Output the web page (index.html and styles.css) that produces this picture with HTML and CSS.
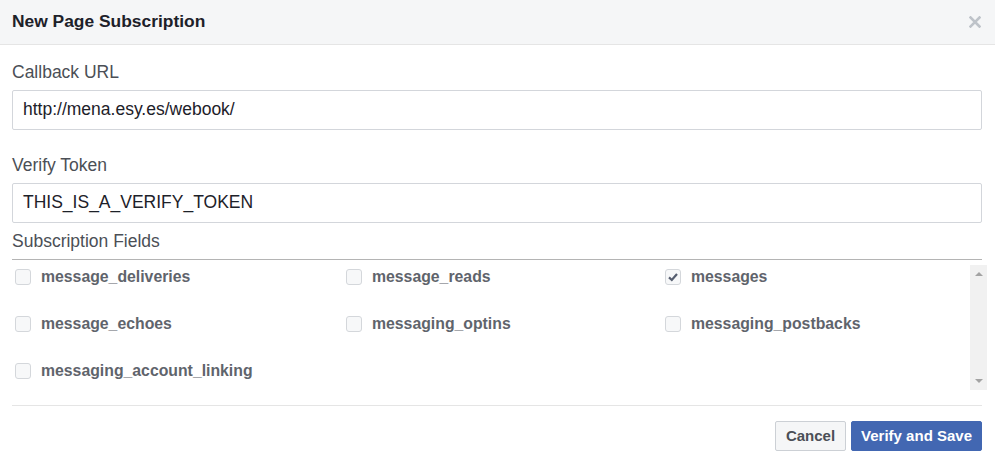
FILE: index.html
```html
<!DOCTYPE html>
<html>
<head>
<meta charset="utf-8">
<title>New Page Subscription</title>
<link rel="stylesheet" href="styles.css">
</head>
<body>
<div class="dialog">
  <header class="hd">
    <h1 class="title">New Page Subscription</h1>
    <span class="close" aria-label="Close">
      <svg width="12" height="12" viewBox="0 0 12 12"><path d="M1.5 1.5L10.5 10.5M10.5 1.5L1.5 10.5" stroke="#bec3c9" stroke-width="2.6" stroke-linecap="square" fill="none"/></svg>
    </span>
  </header>
  <div class="bd">
    <label class="lbl first">Callback URL</label>
    <div class="field">http://mena.esy.es/webook/</div>
    <label class="lbl second">Verify Token</label>
    <div class="field">THIS_IS_A_VERIFY_TOKEN</div>
    <div class="sf">Subscription Fields</div>
    <div class="scroll">
      <div class="grid">
        <div class="item"><span class="cb"></span><span class="name">message_deliveries</span></div>
        <div class="item"><span class="cb"></span><span class="name">message_reads</span></div>
        <div class="item"><span class="cb checked"><svg width="14" height="14" viewBox="0 0 14 14"><path d="M3 7.4L5.8 10L11 4" stroke="#565e70" stroke-width="2.2" fill="none"/></svg></span><span class="name">messages</span></div>
        <div class="item"><span class="cb"></span><span class="name">message_echoes</span></div>
        <div class="item"><span class="cb"></span><span class="name">messaging_optins</span></div>
        <div class="item"><span class="cb"></span><span class="name">messaging_postbacks</span></div>
        <div class="item"><span class="cb"></span><span class="name">messaging_account_linking</span></div>
      </div>
      <div class="sbar">
        <span class="arr up"></span>
        <span class="arr down"></span>
      </div>
    </div>
  </div>
  <footer class="ft">
    <button class="btn cancel">Cancel</button>
    <button class="btn primary">Verify and Save</button>
  </footer>
</div>
</body>
</html>
```
FILE: styles.css
```css
html, body {
  margin: 0;
  padding: 0;
  background: #ffffff;
}
body {
  font-family: "Liberation Sans", Arial, sans-serif;
  color: #1d2129;
}
.dialog {
  width: 995px;
  height: 464px;
  background: #fff;
}
.hd {
  box-sizing: border-box;
  height: 45px;
  padding: 0 14px 3px 12px;
  background: #f5f6f7;
  border-bottom: 1px solid #e5e5e5;
  display: flex;
  align-items: center;
  justify-content: space-between;
}
.title {
  margin: 0;
  font-size: 17.4px;
  line-height: 20px;
  font-weight: bold;
  color: #1d2129;
}
.close {
  display: flex;
  width: 12px;
  height: 12px;
  margin-top: 3px;
}
.bd {
  padding: 0 13px 0 12px;
  display: flex;
  flex-direction: column;
}
.lbl {
  display: block;
  font-size: 17.5px;
  line-height: 20px;
  color: #4b4f56;
  margin-bottom: 8px;
}
.lbl.first { margin-top: 17px; }
.lbl.second { margin-top: 25px; }
.field {
  height: 40px;
  box-sizing: border-box;
  border: 1px solid #d3d6db;
  border-radius: 2px;
  padding: 0 10px;
  font-size: 17.5px;
  line-height: 37px;
  color: #1d2129;
}
.sf {
  margin-top: 8px;
  font-size: 17.5px;
  line-height: 20px;
  color: #4b4f56;
  padding-bottom: 8px;
  border-bottom: 1px solid #b4b4b4;
}
.scroll {
  margin-top: 5px;
  margin-right: -5px;
  height: 125px;
  display: flex;
}
.grid {
  flex: 1;
  display: grid;
  grid-template-columns: 331px 319px 1fr;
  grid-auto-rows: 23px;
  row-gap: 24px;
  align-content: start;
}
.item {
  display: flex;
  align-items: center;
  padding-left: 3px;
  gap: 10px;
}
.cb {
  width: 16px;
  height: 16px;
  box-sizing: border-box;
  border: 1px solid #d4d7db;
  border-radius: 3px;
  background: #f7f8f9;
  display: flex;
  align-items: center;
  justify-content: center;
}
.name {
  font-size: 15.8px;
  line-height: 23px;
  font-weight: bold;
  color: #5f646c;
}
.sbar {
  width: 17px;
  background: #f1f1f1;
  display: flex;
  flex-direction: column;
  justify-content: space-between;
  align-items: center;
  padding: 7px 0 7px;
  box-sizing: border-box;
}
.arr {
  width: 0;
  height: 0;
  border-left: 4px solid transparent;
  border-right: 4px solid transparent;
}
.arr.up { border-bottom: 4px solid #a3a3a3; }
.arr.down { border-top: 4px solid #a3a3a3; }
.ft {
  margin: 15px 13px 0 12px;
  border-top: 1px solid #e5e5e5;
  padding-top: 15px;
  display: flex;
  justify-content: flex-end;
  gap: 5px;
}
.btn {
  height: 30px;
  box-sizing: border-box;
  border-radius: 2px;
  font-family: "Liberation Sans", Arial, sans-serif;
  font-size: 15px;
  font-weight: bold;
  line-height: 28px;
  padding: 0 10px;
  margin: 0;
}
.cancel {
  background: #f5f6f7;
  border: 1px solid #ccd0d5;
  color: #4b4f56;
}
.primary {
  background: #4267b2;
  border: 1px solid #4267b2;
  color: #ffffff;
  padding: 0 9px;
}
```
